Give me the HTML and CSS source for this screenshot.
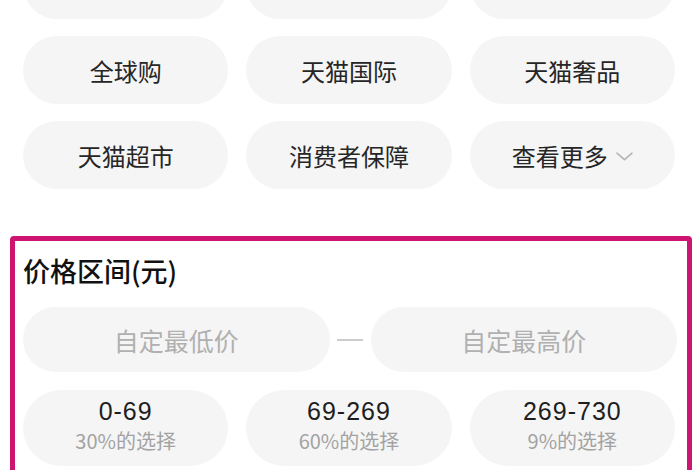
FILE: index.html
```html
<!DOCTYPE html>
<html lang="zh-CN">
<head>
<meta charset="utf-8">
<title>筛选</title>
<link rel="stylesheet" href="styles.css">
</head>
<body>
<div class="page">
  <div class="tags">
    <div class="tag"></div>
    <div class="tag"></div>
    <div class="tag"></div>
    <div class="tag">全球购</div>
    <div class="tag">天猫国际</div>
    <div class="tag">天猫奢品</div>
    <div class="tag">天猫超市</div>
    <div class="tag">消费者保障</div>
    <div class="tag">查看更多<svg class="chev" width="17" height="9" viewBox="0 0 17 9"><path d="M1 1.2 L8.5 7.6 L16 1.2" fill="none" stroke="#b4b4b4" stroke-width="1.6" stroke-linecap="round" stroke-linejoin="round"/></svg></div>
  </div>

  <div class="price-box">
    <div class="title">价格区间(元)</div>
    <div class="inputs">
      <div class="input">自定最低价</div>
      <div class="dash-wrap"><span class="dash"></span></div>
      <div class="input">自定最高价</div>
    </div>
    <div class="ranges">
      <div class="range"><div class="num">0-69</div><div class="sub">30%的选择</div></div>
      <div class="range"><div class="num">69-269</div><div class="sub">60%的选择</div></div>
      <div class="range"><div class="num">269-730</div><div class="sub">9%的选择</div></div>
    </div>
  </div>
</div>
</body>
</html>
```

FILE: styles.css
```css
html, body {
  margin: 0;
  padding: 0;
  background: #ffffff;
}
body {
  width: 700px;
  height: 470px;
  overflow: hidden;
  font-family: "Noto Sans CJK SC", "Noto Sans", sans-serif;
}
.page {
  width: 700px;
}
.tags {
  margin-top: -49px;
  padding: 0 25px 0 23px;
  display: grid;
  grid-template-columns: repeat(3, 1fr);
  column-gap: 18px;
  row-gap: 17px;
}
.tag {
  height: 68px;
  border-radius: 34px;
  background: #f5f5f5;
  color: #262626;
  font-size: 24px;
  display: flex;
  align-items: center;
  justify-content: center;
  gap: 8px;
}
.chev {
  display: block;
  margin-top: 2px;
}
.price-box {
  margin: 47px 8px 0 10px;
  border: 5px solid #cc1470;
  border-radius: 4px;
  padding: 13px 10px 30px 8px;
}
.title {
  font-size: 27px;
  line-height: 34px;
  font-weight: 500;
  color: #111111;
}
.inputs {
  margin-top: 19px;
  display: flex;
  align-items: center;
}
.input {
  flex: 1;
  height: 65px;
  border-radius: 33px;
  background: #f5f5f5;
  color: #b0b0b0;
  font-size: 25px;
  display: flex;
  align-items: center;
  justify-content: center;
}
.dash-wrap {
  width: 41px;
  display: flex;
  justify-content: center;
}
.dash {
  display: block;
  width: 26px;
  height: 2px;
  background: #cccccc;
}
.ranges {
  margin-top: 18px;
  padding-right: 2px;
  display: grid;
  grid-template-columns: repeat(3, 1fr);
  column-gap: 18px;
}
.range {
  height: 76px;
  border-radius: 38px;
  background: #f5f5f5;
  display: flex;
  flex-direction: column;
  align-items: center;
  padding-top: 6px;
  box-sizing: border-box;
}
.num {
  font-family: "Liberation Sans", "Noto Sans CJK SC", sans-serif;
  font-size: 25px;
  line-height: 30px;
  letter-spacing: 1px;
  color: #1e1e1e;
}
.sub {
  font-size: 20px;
  line-height: 30px;
  color: #a3a3a3;
}
```
